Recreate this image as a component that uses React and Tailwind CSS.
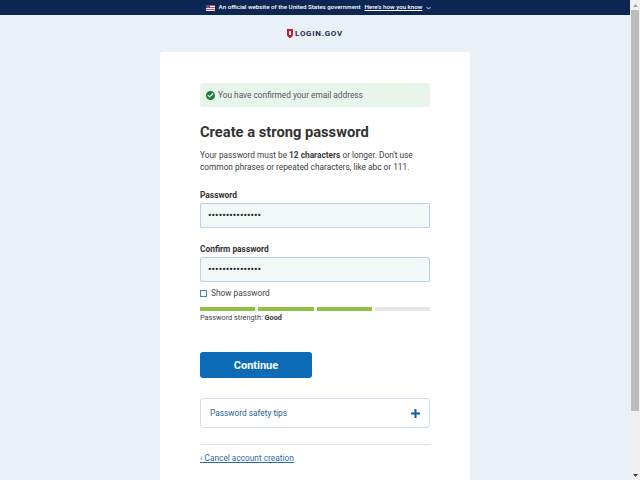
import { Check } from 'lucide-react';

const font = { fontFamily: 'Roboto' };

function Flag() {
  return (
    <svg width="9" height="6" viewBox="0 0 9 6" className="shrink-0">
      <rect width="9" height="6" fill="#eeeeee" />
      <rect y="0" width="9" height="1" fill="#d0505a" />
      <rect y="2" width="9" height="1" fill="#d0505a" />
      <rect y="4" width="9" height="1" fill="#d0505a" />
      <rect width="4" height="3" fill="#4a5a8f" />
    </svg>
  );
}

function Shield() {
  return (
    <svg width="6" height="9" viewBox="0 0 6 9">
      <path d="M0 0h6v5.5C6 7.5 4.5 8.5 3 9 1.5 8.5 0 7.5 0 5.5z" fill="#c81e2e" />
      <rect x="2" y="2" width="2" height="4" fill="#fff" />
    </svg>
  );
}

function PasswordField({ label }) {
  return (
    <div>
      <div className="text-[8.4px] leading-[12px] font-bold text-[#333]">{label}</div>
      <div className="mt-[2px] flex h-[25px] items-center rounded-[2px] border border-[#bcd0e8] bg-[#f1f8f8] pl-[7px] text-[10.5px] text-[#222]">
        •••••••••••••••
      </div>
    </div>
  );
}

export default function App() {
  return (
    <div className="flex h-[480px] overflow-hidden bg-[#e8f0f8]" style={font}>
      <div className="flex min-w-0 flex-1 flex-col">
        <div className="flex h-[15px] items-center justify-center gap-[4px] bg-[#0d2654] pl-[7px] text-[6.2px] text-white">
          <Flag />
          <span className="font-medium">An official website of the United States government</span>
          <span className="font-medium underline">Here's how you know</span>
          <svg width="5" height="4" viewBox="0 0 5 4"><path d="M.5 1l2 2 2-2" fill="none" stroke="#fff" strokeWidth="0.8" /></svg>
        </div>

        <div className="flex h-[37px] items-center justify-center gap-[2px]">
          <Shield />
          <span className="text-[8px] font-bold tracking-[0.7px] text-[#1c2c4c]">LOGIN.GOV</span>
        </div>

        <div className="mx-auto w-[310px] flex-1 rounded-t-[3px] bg-white px-[40px] pt-[31px]">
          <div className="flex h-[24px] items-center gap-[3px] rounded-[3px] bg-[#e7f5ea] pl-[6px] text-[8.3px] text-[#54585c]">
            <span className="flex h-[9px] w-[9px] items-center justify-center rounded-full bg-[#1a7f3c]">
              <Check size={7} color="#fff" strokeWidth={4} />
            </span>
            <span className="pt-[1px]">You have confirmed your email address</span>
          </div>

          <h1 className="mt-[15px] text-[14.7px] leading-[20px] font-bold text-[#333]">Create a strong password</h1>

          <p className="mt-[7px] text-[8.3px] leading-[12px] text-[#3d3d3d]">
            Your password must be <b>12 characters</b> or longer. Don't use common phrases or repeated characters, like abc or 111.
          </p>

          <div className="mt-[16px] flex flex-col gap-[15px]">
            <PasswordField label="Password" />
            <PasswordField label="Confirm password" />
          </div>

          <div className="mt-[5px] flex items-center gap-[4px] text-[8.3px] leading-[12px] text-[#454545]">
            <span className="h-[7px] w-[7px] border border-[#3a8ac0] bg-white" />
            Show password
          </div>

          <div className="mt-[8px] flex gap-[3px]">
            <div className="h-[4px] flex-1 bg-[#94bf45]" />
            <div className="h-[4px] flex-1 bg-[#94bf45]" />
            <div className="h-[4px] flex-1 bg-[#94bf45]" />
            <div className="h-[4px] flex-1 bg-[#e6e6e6]" />
          </div>
          <div className="mt-[2px] text-[7.3px] leading-[10px] text-[#454545]">
            Password strength: <b className="text-[#333]">Good</b>
          </div>

          <button className="mt-[29px] block h-[26px] w-[112px] rounded-[3px] bg-[#0b6bb6] pt-[2px] text-[11px] font-bold text-white">
            Continue
          </button>

          <div className="mt-[20px] flex h-[30px] items-center justify-between rounded-[3px] border border-[#cfdcec] pr-[9px] pl-[9px] text-[8.3px] text-[#2a5f9a]">
            <span className="pt-[1px]">Password safety tips</span>
            <svg width="9" height="9" viewBox="0 0 9 9"><path d="M3.5 0h2v3.5H9v2H5.5V9h-2V5.5H0v-2h3.5z" fill="#0b5ea8" /></svg>
          </div>

          <div className="mt-[16px] border-t border-[#dfe3ea] pt-[7px] text-[8.3px] leading-[12px] text-[#2a6aa8] underline">
            ‹ Cancel account creation
          </div>
        </div>
      </div>

      <div className="flex h-[480px] w-[10px] flex-col bg-[#f0f0f0]">
        <div className="flex h-[10px] items-center justify-center">
          <svg width="5" height="3" viewBox="0 0 5 3"><path d="M2.5 0L5 3H0z" fill="#a0a0a0" /></svg>
        </div>
        <div className="mx-[1px] h-[401px] bg-[#bcbcbc]" />
        <div className="mt-auto flex h-[10px] items-center justify-center">
          <svg width="5" height="3" viewBox="0 0 5 3"><path d="M0 0h5L2.5 3z" fill="#404040" /></svg>
        </div>
      </div>
    </div>
  );
}
